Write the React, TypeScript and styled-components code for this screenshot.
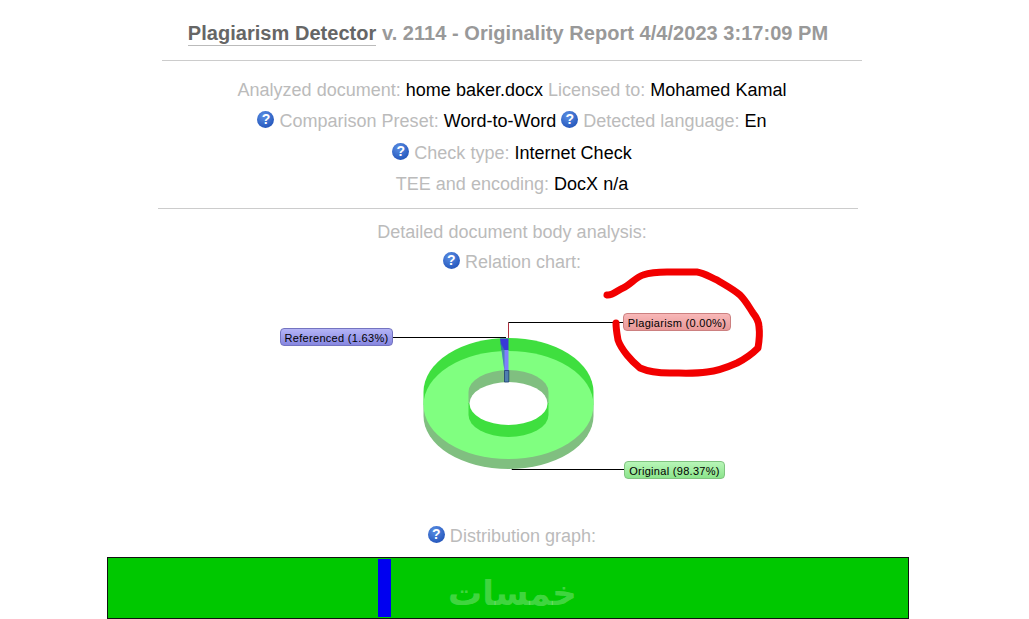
import styled, { createGlobalStyle } from "styled-components";

const GlobalStyle = createGlobalStyle`
  html, body {
    margin: 0;
    padding: 0;
    background: #fff;
    overflow: hidden;
  }
  body {
    font-family: "Liberation Sans", Arial, sans-serif;
  }
`;

const Page = styled.div`
  width: 1024px;
  height: 619px;
  overflow: hidden;
`;

const Title = styled.h1`
  margin: 0;
  padding: 21px 8px 0 0;
  height: 60px;
  box-sizing: border-box;
  text-align: center;
  font-size: 20px;
  line-height: 24px;
  font-weight: 700;
  letter-spacing: 0.04px;
  color: #999;
  white-space: nowrap;
`;

const Brand = styled.span`
  color: #666;
  border-bottom: 1px solid #bbb;
  padding-bottom: 1px;
`;

const Rule = styled.hr<{ $left: number }>`
  width: 700px;
  height: 1px;
  margin: 0 0 0 ${(p) => p.$left}px;
  border: 0;
  background: #ccc;
`;

const Rows = styled.div<{ $top: number; $bottom: number }>`
  display: flex;
  flex-direction: column;
  padding: ${(p) => p.$top}px 0 ${(p) => p.$bottom}px;
`;

const Row = styled.div<{ $h?: number }>`
  height: ${(p) => p.$h ?? 31.4}px;
  line-height: ${(p) => p.$h ?? 31.4}px;
  text-align: center;
  font-size: 18px;
  letter-spacing: 0.01px;
  color: #bbb;
  white-space: nowrap;
`;

const Value = styled.span`
  color: #000;
`;

const Help = styled.span`
  display: inline-block;
  width: 17px;
  height: 17px;
  border-radius: 50%;
  background: radial-gradient(circle at 40% 30%, #5b8fe4, #2a5cc0 70%, #1f4aa0);
  color: #fff;
  font-size: 14px;
  font-weight: 700;
  line-height: 17px;
  text-align: center;
  vertical-align: 3px;
`;

const Chart = styled.div`
  position: relative;
  height: 243px;
`;

const ChartArt = styled.svg`
  position: absolute;
  left: 0;
  top: 0;
  overflow: visible;
`;

const tones = {
  blue: { from: "#b4b4f6", to: "#8686e0", line: "#7474c0" },
  red: { from: "#f8b8b8", to: "#e89898", line: "#cc8080" },
  green: { from: "#b8f6b8", to: "#8ce48c", line: "#80c480" },
};

const Tag = styled.div<{ $x: number; $y: number; $w: number; $tone: keyof typeof tones }>`
  position: absolute;
  left: ${(p) => p.$x}px;
  top: ${(p) => p.$y}px;
  width: ${(p) => p.$w}px;
  height: 18px;
  box-sizing: border-box;
  border: 1px solid ${(p) => tones[p.$tone].line};
  border-radius: 4px;
  background: linear-gradient(${(p) => tones[p.$tone].from}, ${(p) => tones[p.$tone].to});
  color: #000;
  font-size: 11px;
  letter-spacing: 0.3px;
  line-height: 18px;
  text-align: center;
  white-space: nowrap;
`;

const Graph = styled.div`
  position: relative;
  display: flex;
  width: 802px;
  height: 62px;
  margin: 6px 0 0 107px;
  padding: 1px 0;
  box-sizing: border-box;
  border: 1px solid #111;
  background: #00c800;
`;

const Segment = styled.div<{ $w: number; $color: string }>`
  width: ${(p) => p.$w}px;
  background: ${(p) => p.$color};
`;

const Watermark = styled.div`
  position: absolute;
  left: 340px;
  top: 13px;
  width: 124px;
  text-align: center;
  font-family: "DejaVu Sans", sans-serif;
  font-size: 34px;
  font-weight: 700;
  line-height: 44px;
  color: rgba(255, 255, 255, 0.27);
  white-space: nowrap;
`;

function Donut() {
  return (
    <ChartArt width="1024" height="243" viewBox="0 278 1024 243">
      <polyline points="392,337.5 506,337.5" fill="none" stroke="#000" />
      <polyline points="508.5,340 508.5,322.5" fill="none" stroke="#b03040" />
      <polyline points="508.5,322.5 624,322.5" fill="none" stroke="#000" />
      <polyline points="512,465 512,469.5 625,469.5" fill="none" stroke="#000" />

      {/* outer wall */}
      <path d="M423.5 392A85 54 0 0 1 593.5 392V405H423.5Z" fill="#3fdf3f" />
      <path d="M423.5 405V416A85 53 0 0 0 593.5 416V405Z" fill="#80bf80" />
      {/* top face */}
      <ellipse cx="508.5" cy="405" rx="85" ry="54" fill="#80ff80" />
      {/* inner wall */}
      <path d="M468.5 404V392A40 22 0 0 1 548.5 392V404Z" fill="#80bf80" />
      <path d="M468.5 403V415A40 22 0 0 0 548.5 415V403Z" fill="#3fdf3f" />
      <ellipse cx="508.5" cy="403.5" rx="39" ry="21.5" fill="#fff" />

      {/* referenced slice */}
      <path d="M500 338.5H508.5V350H501.5Z" fill="#3838d8" />
      <path d="M501.5 350H508.5V371H504.5Z" fill="#7f7fff" />
      <path d="M500 342L501.5 350L504.5 371V350Z" fill="#2f8f8f" opacity="0.75" />
      <path d="M504.5 370.5H508.8V382H504.5Z" fill="#4f7fb0" stroke="#1f3f70" strokeWidth="0.8" />

      {/* hand drawn marker */}
      <path
        d="M607 295C612 296 618 290 623 288C630 285 636 277 643 275C652 272 660 272 667 272L697 272C704 273 710 277 717 280C725 285 733 289 740 295C746 301 749 307 753 313C757 318 759 322 759 327C760 334 759 342 758 348C752 354 745 359 737 363C728 367 717 371 707 372C694 374 682 373 670 373C660 373 649 372 640 368C635 364 631 360 627 355C623 350 620 346 618 340C617 334 616 329 616 323"
        fill="none"
        stroke="#f20000"
        strokeWidth="7"
        strokeLinecap="round"
        strokeLinejoin="round"
      />
    </ChartArt>
  );
}

export default function App() {
  return (
    <Page>
      <GlobalStyle />
      <Title>
        <Brand>Plagiarism Detector</Brand> v. 2114 - Originality Report 4/4/2023 3:17:09 PM
      </Title>
      <Rule $left={162} />
      <Rows $top={14} $bottom={7.8}>
        <Row>
          Analyzed document: <Value>home baker.docx</Value> Licensed to: <Value>Mohamed Kamal</Value>
        </Row>
        <Row>
          <Help>?</Help> Comparison Preset: <Value>Word-to-Word</Value> <Help>?</Help> Detected language:{" "}
          <Value>En</Value>
        </Row>
        <Row>
          <Help>?</Help> Check type: <Value>Internet Check</Value>
        </Row>
        <Row>
          TEE and encoding: <Value>DocX n/a</Value>
        </Row>
      </Rows>
      <Rule $left={158} />
      <Rows $top={8} $bottom={0}>
        <Row $h={30}>Detailed document body analysis:</Row>
        <Row $h={31}>
          <Help>?</Help> Relation chart:
        </Row>
      </Rows>
      <Chart>
        <Donut />
        <Tag $x={280} $y={50} $w={113} $tone="blue">
          Referenced (1.63%)
        </Tag>
        <Tag $x={623} $y={35} $w={108} $tone="red">
          Plagiarism (0.00%)
        </Tag>
        <Tag $x={624} $y={183} $w={101} $tone="green">
          Original (98.37%)
        </Tag>
      </Chart>
      <Row $h={30}>
        <Help>?</Help> Distribution graph:
      </Row>
      <Graph>
        <Segment $w={270} $color="#00c800" />
        <Segment $w={13} $color="#0000f0" />
        <Watermark>خمسات</Watermark>
      </Graph>
    </Page>
  );
}
